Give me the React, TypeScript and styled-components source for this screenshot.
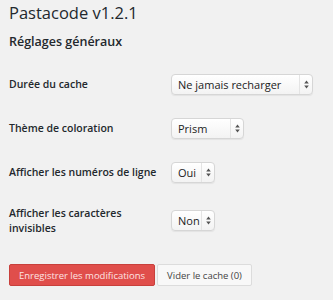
import styled, {createGlobalStyle} from 'styled-components';

const GlobalStyle = createGlobalStyle`
    html, body {
        margin: 0;
        padding: 0;
        background: #f1f1f1;
    }
    body {
        font-family: "Open Sans", "Liberation Sans", sans-serif;
        color: #23282d;
    }
`;

const Page = styled.div`
    padding: 0 9px;
    width: 333px;
    height: 300px;
    box-sizing: border-box;
    overflow: hidden;
`;

const Title = styled.h1`
    margin: 0;
    padding-top: 2px;
    font-size: 16.5px;
    font-weight: 400;
    line-height: 22px;
    color: #23282d;
`;

const SectionTitle = styled.h2`
    margin: 8px 0 0;
    font-size: 12.5px;
    font-weight: 600;
    line-height: 20px;
    color: #23282d;
`;

const FormTable = styled.div`
    display: flex;
    flex-direction: column;
    margin-top: 10px;
`;

const Row = styled.div`
    display: flex;
    align-items: center;
    padding: 11.5px 0;
`;

const Label = styled.label`
    width: 162px;
    flex-shrink: 0;
    box-sizing: border-box;
    font-size: 10.5px;
    font-weight: 600;
    line-height: 15px;
    color: #23282d;
    padding-right: 10px;
`;

const SelectBox = styled.div<{ $width: number }>`
    display: flex;
    align-items: stretch;
    width: ${({$width}) => $width}px;
    height: 21px;
    box-sizing: border-box;
    border: 1px solid #d6d6d6;
    border-radius: 4px;
    background: linear-gradient(#ffffff, #f3f3f3);
    box-shadow: 0 1px 1px rgba(0, 0, 0, 0.06);
    font-size: 11px;
    color: #222;
`;

const SelectValue = styled.span`
    flex: 1;
    display: flex;
    align-items: center;
    padding-left: 6px;
    white-space: nowrap;
`;

const SelectArrow = styled.span`
    width: 12px;
    border-left: 1px solid #e4e4e4;
    display: flex;
    align-items: center;
    justify-content: center;
`;

const Actions = styled.div`
    display: flex;
    gap: 2px;
    margin-top: 17px;
`;

const Button = styled.button<{ $primary?: boolean }>`
    height: 22px;
    padding: 0 9px;
    font-family: inherit;
    font-size: 9.5px;
    border-radius: 2px;
    border: 1px solid ${({$primary}) => ($primary ? '#c8403c' : '#dcdcdc')};
    background: ${({$primary}) => ($primary ? '#e04e4b' : '#f8f8f8')};
    color: ${({$primary}) => ($primary ? '#fde4e3' : '#444')};
    cursor: pointer;
`;

const Arrows = () => (
    <svg width="5" height="9" viewBox="0 0 5 9">
        <path d="M2.5 0.5 L4.8 3.6 H0.2 Z M2.5 8.5 L4.8 5.4 H0.2 Z" fill="#555"/>
    </svg>
);

interface SelectProps {
    value: string;
    width: number;
}

const Select = ({value, width}: SelectProps) => (
    <SelectBox $width={width}>
        <SelectValue>{value}</SelectValue>
        <SelectArrow><Arrows/></SelectArrow>
    </SelectBox>
);

const rows = [
    {label: 'Durée du cache', value: 'Ne jamais recharger', width: 142},
    {label: 'Thème de coloration', value: 'Prism', width: 73},
    {label: 'Afficher les numéros de ligne', value: 'Oui', width: 44},
    {label: 'Afficher les caractères invisibles', value: 'Non', width: 44},
];

export default function App() {
    return (
        <Page>
            <GlobalStyle/>
            <Title>Pastacode v1.2.1</Title>
            <SectionTitle>Réglages généraux</SectionTitle>
            <FormTable>
                {rows.map((row) => (
                    <Row key={row.label}>
                        <Label>{row.label}</Label>
                        <Select value={row.value} width={row.width}/>
                    </Row>
                ))}
            </FormTable>
            <Actions>
                <Button $primary>Enregistrer les modifications</Button>
                <Button>Vider le cache (0)</Button>
            </Actions>
        </Page>
    );
}
